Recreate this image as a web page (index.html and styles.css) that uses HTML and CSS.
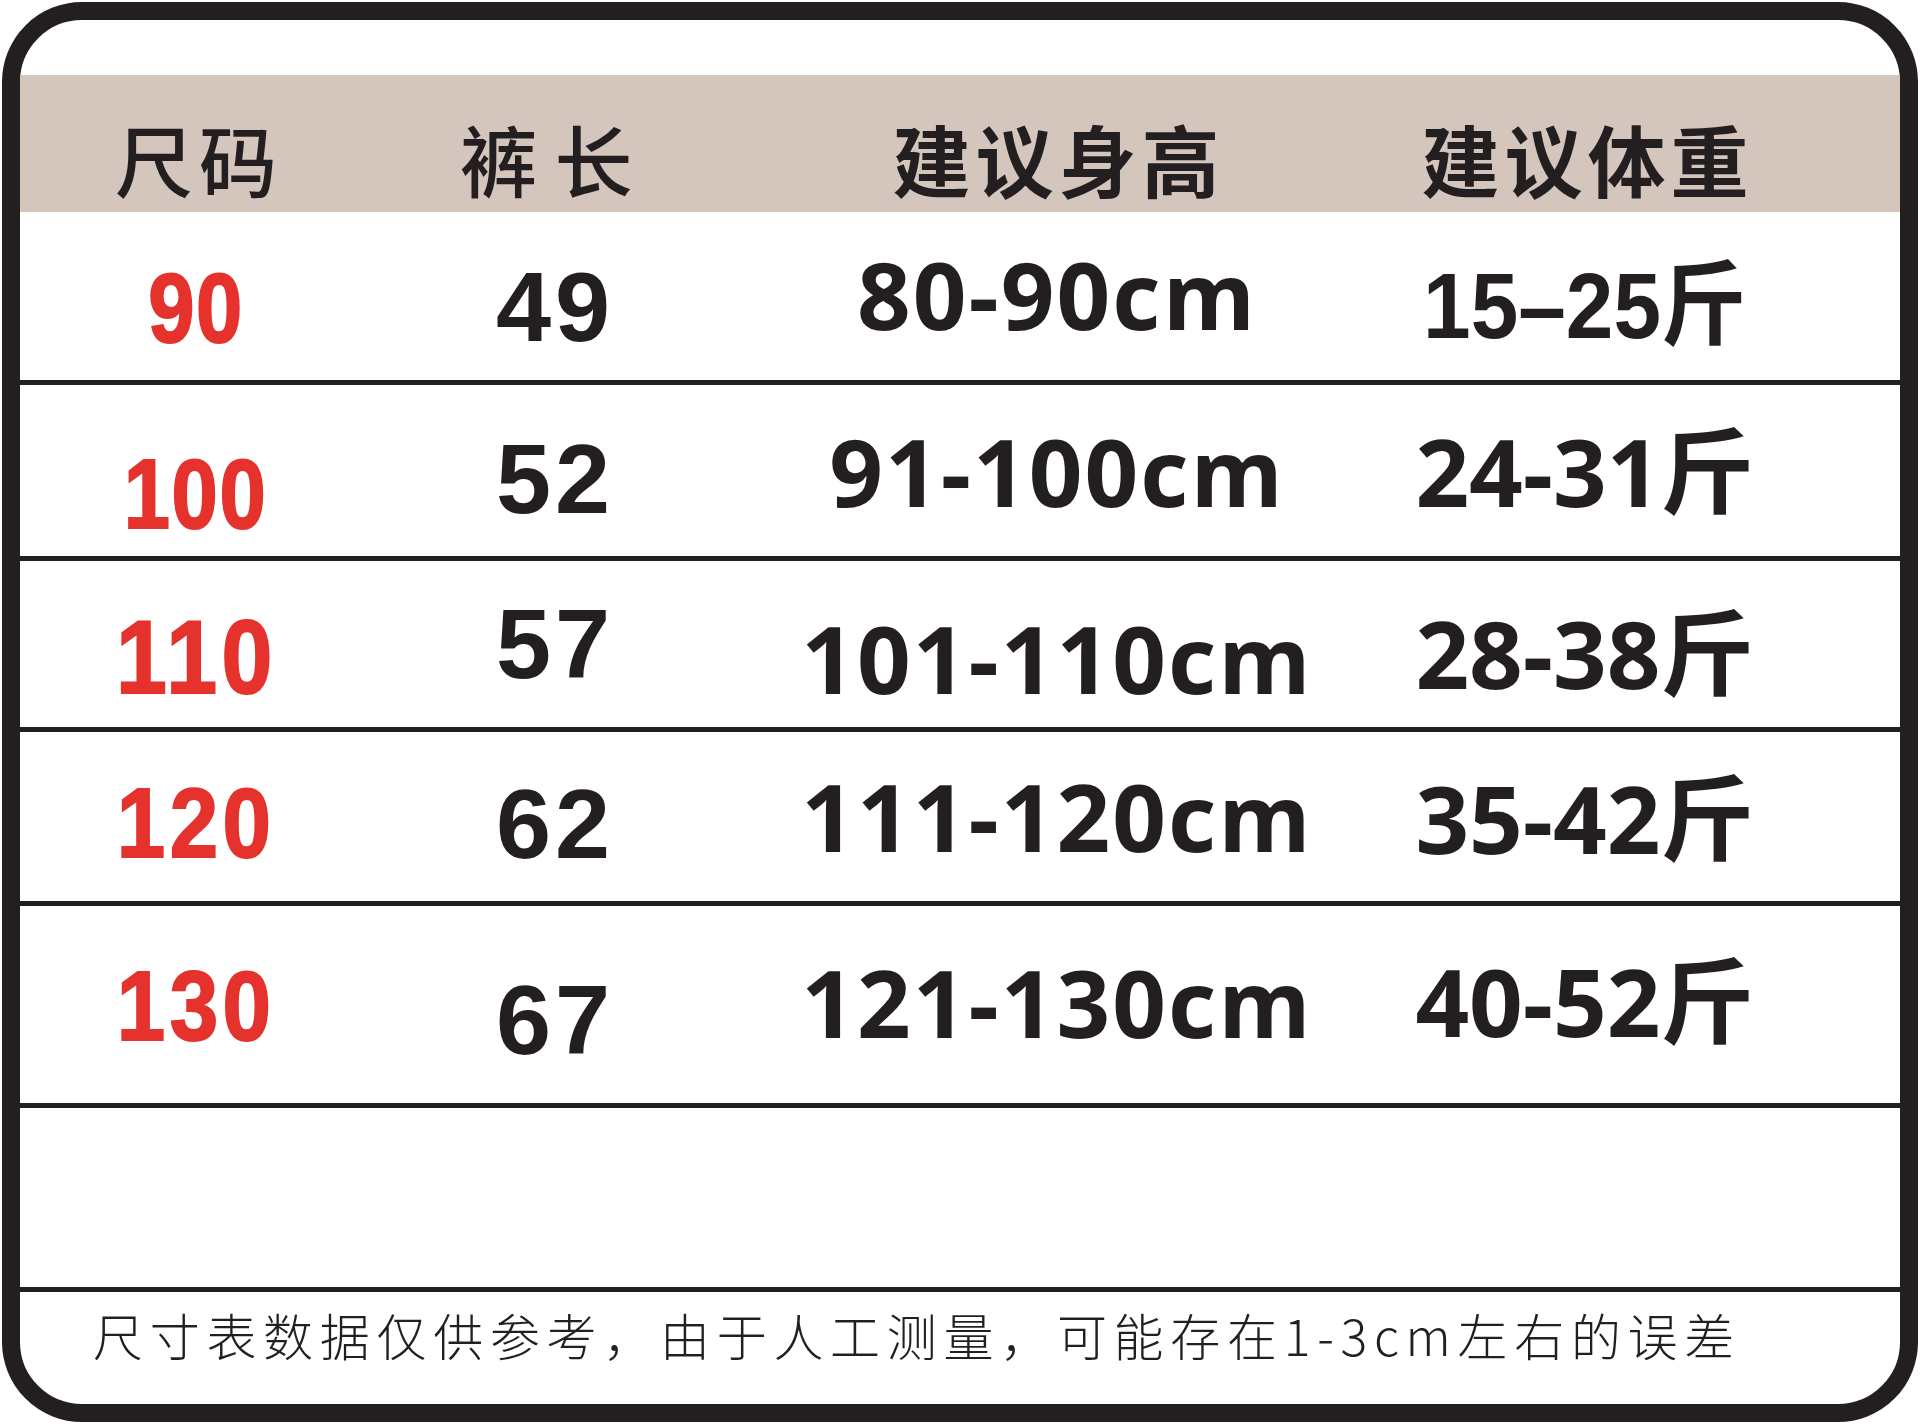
FILE: index.html
```html
<!DOCTYPE html>
<html lang="zh-CN">
<head>
<meta charset="utf-8">
<title>尺码表</title>
<link rel="stylesheet" href="styles.css">
</head>
<body>
<div class="card">
  <div class="gap"></div>
  <div class="row head">
    <div class="cell c1 hs">尺码</div>
    <div class="cell c2 hs wide">裤长</div>
    <div class="cell c3 hb">建议身高</div>
    <div class="cell c4 hb">建议体重</div>
  </div>
  <div class="row r1 line">
    <div class="cell c1 size"><span class="nar">90</span></div>
    <div class="cell c2 len">49</div>
    <div class="cell c3 ht">80-90cm</div>
    <div class="cell c4 wt"><span class="cond">15–25斤</span></div>
  </div>
  <div class="row r2 line">
    <div class="cell c1 size"><span class="nar">100</span></div>
    <div class="cell c2 len">52</div>
    <div class="cell c3 ht">91-100cm</div>
    <div class="cell c4 wt">24-31斤</div>
  </div>
  <div class="row r3 line">
    <div class="cell c1 size big"><span class="nar wider">110</span></div>
    <div class="cell c2 len">57</div>
    <div class="cell c3 ht">101-110cm</div>
    <div class="cell c4 wt">28-38斤</div>
  </div>
  <div class="row r4 line">
    <div class="cell c1 size"><span class="nar wider">120</span></div>
    <div class="cell c2 len">62</div>
    <div class="cell c3 ht">111-120cm</div>
    <div class="cell c4 wt">35-42斤</div>
  </div>
  <div class="row r5 line">
    <div class="cell c1 size"><span class="nar wider">130</span></div>
    <div class="cell c2 len">67</div>
    <div class="cell c3 ht">121-130cm</div>
    <div class="cell c4 wt">40-52斤</div>
  </div>
  <div class="row empty line"></div>
  <div class="foot">尺寸表数据仅供参考，由于人工测量，可能存在1-3cm左右的误差</div>
</div>
</body>
</html>
```

FILE: styles.css
```css
html, body {
  margin: 0;
  padding: 0;
  background: #ffffff;
}
body {
  width: 1920px;
  height: 1424px;
  padding: 2px;
  box-sizing: border-box;
  overflow: hidden;
}
.card {
  width: 1916px;
  height: 1420px;
  box-sizing: border-box;
  border: 18px solid #231f20;
  border-radius: 80px;
  overflow: hidden;
  background: #ffffff;
  display: flex;
  flex-direction: column;
  color: #231f20;
}
.gap {
  height: 55px;
  flex: none;
}
.row {
  flex: none;
  display: grid;
  grid-template-columns: 352px 362px 644px 414px 1fr;
  align-items: start;
}
.line {
  border-bottom: 5px solid #231f20;
}
.cell {
  text-align: center;
  line-height: 1;
  white-space: nowrap;
}
.head {
  height: 137px;
  background: #d4c6bd;
}
.head .cell {
  padding-top: 44px;
  font-family: "Noto Sans CJK SC", sans-serif;
  font-size: 78px;
  letter-spacing: 5px;
  text-indent: 5px;
}
.head .hs {
  font-weight: 500;
  letter-spacing: 6px;
  text-indent: 6px;
}
.head .wide {
  letter-spacing: 17px;
  text-indent: 3px;
}
.head .hb {
  font-weight: 700;
}

.r1 { height: 168px; }
.r2 { height: 171px; }
.r3 { height: 166px; }
.r4 { height: 169px; }
.r5 { height: 197px; }
.empty { height: 179px; }

.size {
  font-family: "Liberation Sans", sans-serif;
  font-weight: 700;
  font-size: 99px;
  color: #e5322d;
}
.nar {
  display: inline-block;
  letter-spacing: 2px;
  -webkit-text-stroke: 2px #e5322d;
  transform: scaleX(0.84);
  transform-origin: center;
}
.nar.wider {
  letter-spacing: 5px;
  transform: scaleX(0.88);
}
.size.big {
  font-size: 104px;
}
.len {
  font-family: "Liberation Sans", sans-serif;
  font-weight: 700;
  font-size: 99px;
  letter-spacing: 4px;
  text-indent: 4px;
}
.ht {
  font-family: "Open Sans", "Noto Sans CJK SC", sans-serif;
  font-weight: 700;
  font-size: 94px;
  letter-spacing: 2px;
  text-indent: 2px;
}
.wt {
  font-family: "Open Sans", "Noto Sans CJK SC", sans-serif;
  font-weight: 700;
  font-size: 94px;
}
.cond {
  display: inline-block;
  font-family: "Liberation Sans", "Noto Sans CJK SC", sans-serif;
  font-size: 93px;
  transform: scaleX(0.92);
  transform-origin: center;
}

.r1 .c1 { padding-top: 46px; }
.r1 .c2 { padding-top: 45px; }
.r1 .c3 { padding-top: 35px; }
.r1 .c4 { padding-top: 43px; }

.r2 .c1 { padding-top: 59px; }
.r2 .c2 { padding-top: 44px; }
.r2 .c3 { padding-top: 39px; }
.r2 .c4 { padding-top: 39px; }

.r3 .c1 { padding-top: 44px; }
.r3 .c2 { padding-top: 33px; }
.r3 .c3 { padding-top: 50px; }
.r3 .c4 { padding-top: 45px; }

.r4 .c1 { padding-top: 41px; }
.r4 .c2 { padding-top: 42px; }
.r4 .c3 { padding-top: 37px; }
.r4 .c4 { padding-top: 39px; }

.r5 .c1 { padding-top: 50px; }
.r5 .c2 { padding-top: 64px; }
.r5 .c3 { padding-top: 49px; }
.r5 .c4 { padding-top: 48px; }

.foot {
  flex: 1;
  padding: 17px 0 0 73px;
  font-family: "Noto Sans CJK SC", sans-serif;
  font-weight: 300;
  font-size: 50px;
  line-height: 1;
  letter-spacing: 6.7px;
  white-space: nowrap;
  color: #231f20;
}
```
